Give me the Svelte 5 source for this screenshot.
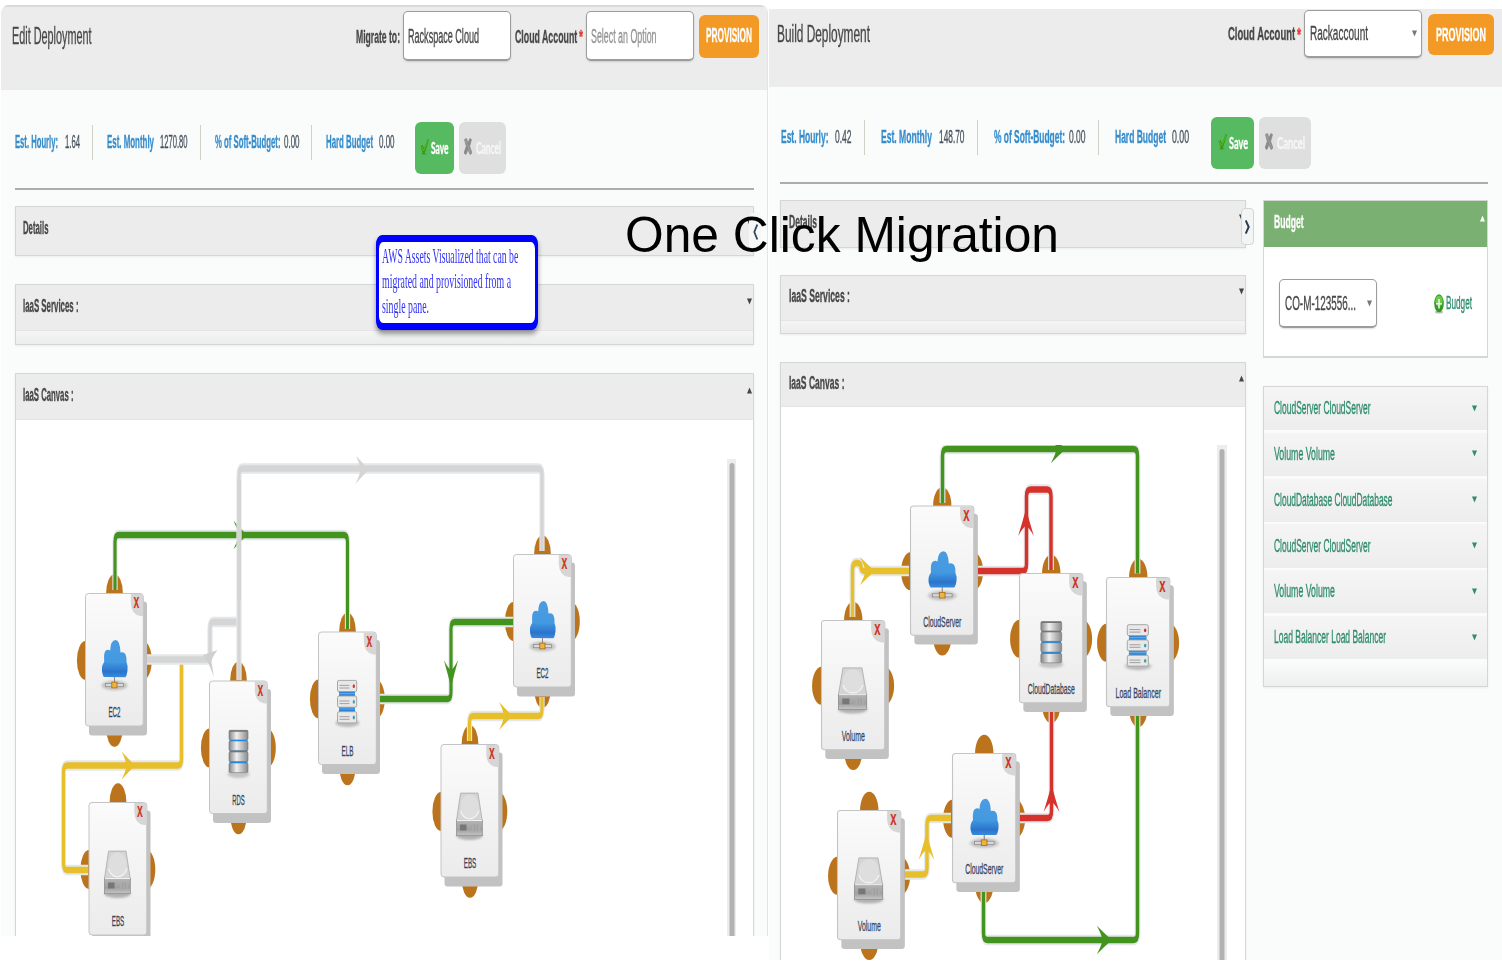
<script>
  const left = {
    id: 'stage-left', sx: 0.5, nx: 1, ny: 1,
    view: [16, 420, 737, 516],
    bar: [727, 459, 9, 480],
    nodes: [
      { x: 85.5, y: 593.5, kind: 'cloud', label: 'EC2', w: 12 },
      { x: 209.5, y: 681, kind: 'db', label: 'RDS', w: 12.5 },
      { x: 89, y: 802.5, kind: 'disk', label: 'EBS', w: 12.5 },
      { x: 318.5, y: 632, kind: 'lb', label: 'ELB', w: 12 },
      { x: 513.5, y: 554.5, kind: 'cloud', label: 'EC2', w: 12 },
      { x: 441, y: 744.5, kind: 'disk', label: 'EBS', w: 12.5 }
    ],
    wires: [
      { c: '#43931f', p: [[115, 590], [115, 535], [347.5, 535], [347.5, 629]], a: [240, 535, 0] },
      { c: '#e6bf2b', p: [[88, 870], [63.5, 870], [63.5, 765.5], [181.5, 765.5], [181.5, 663]], a: [128, 765.5, 0] },
      { c: '#d5d5d5', p: [[147, 659.5], [210, 659.5], [210, 622], [239, 622]] },
      { c: '#d5d5d5', p: [[239, 680], [239, 468.5], [542, 468.5], [542, 551]], a: [362, 469.5, 0] },
      { c: '#43931f', p: [[513, 622], [451, 622], [451, 699], [380, 699]], a: [451, 673, 90] },
      { c: '#e6bf2b', p: [[469.5, 741], [469.5, 716], [542, 716], [542, 697]], a: [505.5, 716, 0] }
    ]
  };
  const right = {
    id: 'stage-right', sx: 0.55, nx: 1.095, ny: 0.975,
    view: [781, 407, 464, 553],
    bar: [1217, 445, 10, 520],
    nodes: [
      { x: 910.5, y: 506, kind: 'cloud', label: 'CloudServer', w: 38 },
      { x: 821.5, y: 620.5, kind: 'disk', label: 'Volume', w: 23 },
      { x: 1019.5, y: 573.5, kind: 'db', label: 'CloudDatabase', w: 47 },
      { x: 1106.5, y: 577.5, kind: 'lb', label: 'Load Balancer', w: 45.5 },
      { x: 952.5, y: 753.5, kind: 'cloud', label: 'CloudServer', w: 38 },
      { x: 837.5, y: 810.5, kind: 'disk', label: 'Volume', w: 23 }
    ],
    wires: [
      { c: '#43931f', p: [[942.5, 503], [942.5, 449], [1137.5, 449], [1137.5, 573.5]], a: [1058, 449, 0] },
      { c: '#d6322c', p: [[978, 571], [1026.5, 571], [1026.5, 489.5], [1051, 489.5], [1051, 570]], a: [1026, 523, -90] },
      { c: '#e6bf2b', p: [[852.5, 617], [852.5, 563], [861, 563], [861, 571], [909, 571]], a: [867, 571, 0] },
      { c: '#e6bf2b', p: [[905, 874.5], [927, 874.5], [927, 818], [951, 818]], a: [926.5, 847, -90] },
      { c: '#d6322c', p: [[1020, 818], [1051.5, 818], [1051.5, 711]], a: [1051.5, 799, -90] },
      { c: '#43931f', p: [[983.5, 891], [983.5, 940], [1137.5, 940], [1137.5, 715]], a: [1104, 940, 0] }
    ]
  };
  const leftStats = [
    ['Est. Hourly:', 43, '1.64', 15],
    ['Est. Monthly', 47, '1270.80', 27.5],
    ['% of Soft-Budget:', 65.5, '0.00', 15.5],
    ['Hard Budget', 47, '0.00', 15.5]
  ];
  const rightStats = [
    ['Est. Hourly:', 47.5, '0.42', 16.5],
    ['Est. Monthly', 51, '148.70', 25.5],
    ['% of Soft-Budget:', 71, '0.00', 16.5],
    ['Hard Budget', 51, '0.00', 17]
  ];
  const resources = [
    ['CloudServer CloudServer', 96.5],
    ['Volume Volume', 61],
    ['CloudDatabase CloudDatabase', 118.5],
    ['CloudServer CloudServer', 96.5],
    ['Volume Volume', 61],
    ['Load Balancer Load Balancer', 112]
  ];

  const pen = document.createElement('canvas').getContext('2d');
  // Horizontal scale that makes a text exactly `w` pixels wide.
  function squeeze(text, w, size, cls = '') {
    const family = cls.includes('serif') ? 'Liberation Serif' : cls.includes('lato') ? 'Lato' : 'Liberation Sans';
    pen.font = `${cls.includes('bold') ? 700 : 400} ${size * 4}px "${family}"`;
    return (w * 4) / pen.measureText(text).width;
  }

  // Rounded polyline in a horizontally compressed coordinate space.
  function route(points, sx) {
    const p = points.map(([x, y]) => [x / sx, y]);
    let d = `M${p[0]}`;
    for (let i = 1; i < p.length - 1; i++) {
      const step = (q) => {
        const dx = q[0] - p[i][0], dy = q[1] - p[i][1];
        const len = Math.hypot(dx, dy), r = Math.min(7, len / 2);
        return [p[i][0] + (dx / len) * r, p[i][1] + (dy / len) * r];
      };
      d += `L${step(p[i - 1])}Q${p[i]} ${step(p[i + 1])}`;
    }
    return d + `L${p[p.length - 1]}`;
  }
</script>

{#snippet t(text, w, size, cls)}
  <div class="t {cls}" style="width:{w}px;height:{size}px;font-size:{size}px"><span style="transform:scaleX({squeeze(text, w, size, cls)})">{text}</span></div>
{/snippet}

{#snippet tri(up, cls)}
  <svg class="tri {cls}" width="5" height="7" viewBox="0 0 5 7"><path d={up ? 'M0 6.5L2.5 .5L5 6.5Z' : 'M0 .5H5L2.5 6.5Z'} fill="currentColor" /></svg>
{/snippet}

{#snippet stats(list)}
  {#each list as [label, lw, value, vw]}
    <div class="stat">
      {@render t(label, lw, 18, 'bold blue')}
      {@render t(value, vw, 18, 'ink')}
    </div>
  {/each}
{/snippet}

{#snippet buttons(sw, cw)}
  <div class="actions">
    <button class="save">
      <svg width="9" height="17" viewBox="0 0 9 17"><path d="M.6 8L2.7 7L4 10.5L7.6 1L9 2L4.6 16H2.8Z" fill="#3a9a10" /><path d="M1.5 8.5L3.5 13L8 2.5" fill="none" stroke="#5cba28" stroke-width=".9" /><path d="M1.5 16h5" stroke="#2c7d35" opacity=".5" /></svg>
      {@render t('Save', sw, 17, 'bold lato white')}
    </button>
    <button class="cancel">
      <svg width="8" height="17" viewBox="0 0 8 17"><path d="M.5 1.5L2.5 .5L4 5L5.8 .5L7.5 1.5L5.6 8.3L8 15L6 16.5L4 11.5L2 16.5L0 15L2.3 8.3Z" fill="#8a8a8a" stroke="#8a8a8a" stroke-width=".7" /><path d="M1.5 2L4 8.3L6.5 15" fill="none" stroke="#aaa" stroke-width=".7" /></svg>
      {@render t('Cancel', cw, 17, 'bold lato pale')}
    </button>
  </div>
{/snippet}

{#snippet icon(kind)}
  {#if kind === 'cloud'}
    <ellipse cx="29" cy="92" rx="13" ry="5" fill="#999" opacity=".5" filter="url(#soft)" />
    <path d="M29 83v8" stroke="#888" stroke-width="1" />
    <rect x="20" y="90" width="18" height="3.2" fill="#d8d8d8" stroke="#888" stroke-width=".7" />
    <rect x="26.3" y="88.6" width="5.2" height="5.8" fill="#eeb440" stroke="#a76a16" stroke-width=".8" />
    <path d="M18.3 83.5Q15.8 79 16.6 73Q17.3 70 18.7 68.5Q18 58 20.6 56.8Q22.8 55.6 24.6 57Q25.2 46.5 30 46.4Q34.5 46.5 35 59Q38.5 58 40.1 61Q41.2 63.5 41 68.5Q42.6 72 42 77Q41.4 82 40 83.7Z" fill="url(#sky)" />
    <path d="M19 69Q25 74 32 73Q37 73 40.5 69.5" fill="none" stroke="#3187d6" stroke-width="1.4" opacity=".4" />
  {:else if kind === 'db'}
    <ellipse cx="29" cy="93" rx="11" ry="4" fill="#999" opacity=".5" filter="url(#soft)" />
    <rect x="20" y="56" width="18" height="30" fill="#2688dc" />
    {#each [49.3, 60, 71, 82] as y}
      <rect x="19.5" y={y} width="19" height="9.6" rx="1.4" fill="url(#steel)" stroke="#777" stroke-width=".6" />
    {/each}
    <path d="M20.5 59.5h17M20.5 70.5h17M20.5 81.5h17" stroke="#2688dc" stroke-width="1.1" />
    <path d="M20 50h18" stroke="#777" stroke-width="1.6" />
  {:else if kind === 'disk'}
    <ellipse cx="28.5" cy="91.5" rx="13" ry="4" fill="#888" opacity=".6" filter="url(#soft)" />
    <path d="M19.6 48.6H37L41.2 76H15.5Z" fill="#d5d5d5" stroke="#aaa" stroke-width=".8" />
    <ellipse cx="28.6" cy="62" rx="9.2" ry="12" fill="#dedede" />
    <path d="M19.5 66Q22 74.3 28.7 74.3Q35 74.3 38 66" fill="none" stroke="#f4f4f4" stroke-width="1.2" />
    <rect x="15.5" y="75.8" width="25.8" height="15.4" fill="url(#base)" stroke="#888" stroke-width=".7" />
    <path d="M15.8 76H41" stroke="#f2f2f2" stroke-width="1" />
    <rect x="19" y="80" width="6.5" height="6" fill="#777" />
    <rect x="31" y="80" width="8" height="6.5" fill="#aaa" />
    <path d="M33.5 80v6.5M36.2 80v6.5" stroke="#8f8f8f" stroke-width=".5" />
  {:else}
    <ellipse cx="29" cy="91" rx="12" ry="4" fill="#999" opacity=".6" filter="url(#soft)" />
    <rect x="20.5" y="58" width="16" height="24" fill="#2b82d4" />
    <path d="M20.5 61.7h16M20.5 77h16" stroke="#5aa9ea" stroke-width="1.2" />
    {#each [48.4, 64, 79.7] as y, i}
      <rect x="19" y={y} width="19.2" height="11.2" rx="1.6" fill="#e8e8e8" stroke="#a0a0a0" stroke-width=".9" />
      <path d={`M21 ${y + 5}h10M21 ${y + 7.6}h10`} stroke="#999" stroke-width=".9" />
      <ellipse cx="35.3" cy={y + 5.8} rx="1.1" ry="1.9" fill={i ? '#39a0ae' : '#c93a2d'} />
    {/each}
  {/if}
{/snippet}

{#snippet canvas(c)}
  <svg class="canvas" width={c.view[2]} height={c.view[3]} viewBox={c.view.join(' ')}>
    <defs>
      <linearGradient id="card" x2="0" y2="1"><stop offset="0" stop-color="#fbfbfc" /><stop offset="1" stop-color="#ebebec" /></linearGradient>
      <linearGradient id="sky" x2="0" y2="1"><stop offset="0" stop-color="#4c9ce2" /><stop offset=".6" stop-color="#4399e0" /><stop offset=".85" stop-color="#2a74cc" /><stop offset="1" stop-color="#3a8bdc" /></linearGradient>
      <linearGradient id="steel"><stop offset="0" stop-color="#858585" /><stop offset=".4" stop-color="#f0f0f0" /><stop offset="1" stop-color="#8a8a8a" /></linearGradient>
      <linearGradient id="base" x2="0" y2="1"><stop offset="0" stop-color="#b5b5b5" /><stop offset=".6" stop-color="#a0a0a0" /><stop offset="1" stop-color="#c5c5c5" /></linearGradient>
      <filter id="soft" x="-30%" y="-80%" width="160%" height="260%"><feGaussianBlur stdDeviation="1.3" /></filter>
      <clipPath id={c.id}><rect x={c.view[0]} y={c.bar[1] - (c === left ? 2 : 0)} width={c.view[2]} height="600" /></clipPath>
    </defs>
    <g clip-path={`url(#${c.id})`}>
      {#each c.nodes as n}
        <g transform={`translate(${n.x} ${n.y}) scale(${c.nx} ${c.ny})`} fill="#bb741c">
          <ellipse cx="29" cy="0" rx="8.4" ry="19.3" />
          <ellipse cx="29" cy="134" rx="8.4" ry="19.3" />
          <ellipse cx="0" cy="67" rx="8.6" ry="19.5" />
          <ellipse cx="57.5" cy="67" rx="8.8" ry="19.5" />
        </g>
      {/each}
      {#each c.wires as w}
        <g transform={`scale(${c.sx} 1)`} fill="none">
          <path d={route(w.p, c.sx)} stroke="#e4e8eb" stroke-width="10.5" />
          <path d={route(w.p, c.sx)} stroke={w.c} stroke-width="6.3" />
          {#if w.a}
            <path transform={`translate(${w.a[0] / c.sx} ${w.a[1]}) rotate(${w.a[2]})`} d="M14 0Q2-6-13-14.3Q-4-5-3 0Q-4 5-13 14.3Q2 6 14 0Z" fill={w.c} />
          {/if}
        </g>
      {/each}
      {#if c === left}
        <path d="M237 480V600h4V480Z" fill="#d5d5d5" />
        <path d="M203 655L217.5 650Q212 657 211.5 662L214 677Q209 663 203 655Z" fill="#d0d0d0" />
      {/if}
      {#each c.nodes as n}
        <g transform={`translate(${n.x} ${n.y}) scale(${c.nx} ${c.ny})`}>
          <rect x="3.5" y="8" width="58" height="134" rx="3" fill="#c2c2c2" />
          <rect x="0" y="0" width="57.8" height="132.5" rx="3" fill="url(#card)" stroke="#c4c4c4" stroke-width="1" />
          <path d="M45.3.5H55Q57.5.5 57.5 4V22.5H55Q45.5 21 45.3 9Z" fill="#d6d6d6" />
          {@render icon(n.kind)}
        </g>
        <text transform={`translate(${n.x + 48.1 * c.nx} ${n.y + 14.7}) scale(${squeeze('x', 5.8 * c.nx, 20, 'bold')} 1)`} font-size="20" font-weight="700" fill="#cf3428">x</text>
        <text class="label" transform={`translate(${n.x + 29 * c.nx - n.w / 2} ${n.y + 124 * c.ny - 0.3}) scale(${squeeze(n.label, n.w, 15)} 1)`} font-size="15" fill="#39465a">{n.label}</text>
      {/each}
      <rect x={c.bar[0]} y={c.bar[1]} width={c.bar[2]} height={c.bar[3]} fill="#ededed" />
      <rect x={c.bar[0] + 2.5} y={c.bar[1] + 4} width="5" height={c.bar[3]} rx="2.5" fill="#b2b2b2" />
    </g>
  </svg>
{/snippet}

<div class="page">
  <section class="panel edit">
    <header>
      {@render t('Edit Deployment', 79.5, 23.5, 'dark title')}
      {@render t('Migrate to:', 44, 19, 'bold dark')}
      <div class="field f1">{@render t('Rackspace Cloud', 71, 19.5, 'dark')}</div>
      {@render t('Cloud Account', 62.5, 19, 'bold dark')}
      {@render t('*', 4, 19, 'bold red')}
      <div class="field f2">{@render t('Select an Option', 65.5, 19.5, 'muted')}</div>
      <button class="provision">{@render t('PROVISION', 46, 19.5, 'bold white')}</button>
    </header>
    <div class="body">
      <div class="stats">
        {@render stats(leftStats)}
        {@render buttons(17.5, 25)}
      </div>
      <div class="box details">{@render t('Details', 25.5, 18, 'bold dark')}{@render tri(false, '')}</div>
      <div class="box services"><div class="head">{@render t('IaaS Services :', 55.5, 18, 'bold dark')}{@render tri(false, '')}</div></div>
      <div class="box work">
        <div class="head">{@render t('IaaS Canvas :', 50.5, 18, 'bold dark')}{@render tri(true, '')}</div>
        {@render canvas(left)}
      </div>
    </div>
  </section>

  <section class="panel build">
    <header>
      {@render t('Build Deployment', 93, 23, 'dark title')}
      {@render t('Cloud Account', 67.5, 18.5, 'bold dark')}
      {@render t('*', 4, 19, 'bold red')}
      <div class="field f3">{@render t('Rackaccount', 58, 19.5, 'dark')}{@render tri(false, 'faint')}</div>
      <button class="provision">{@render t('PROVISION', 50, 19, 'bold white')}</button>
    </header>
    <div class="body">
      <div class="stats">
        {@render stats(rightStats)}
        {@render buttons(19, 28)}
      </div>
      <div class="columns">
        <main>
          <div class="box details">{@render t('Details', 28, 17.5, 'bold dark')}{@render tri(false, '')}</div>
          <div class="box services"><div class="head">{@render t('IaaS Services :', 61, 17.5, 'bold dark')}{@render tri(false, '')}</div></div>
          <div class="box work">
            <div class="head">{@render t('IaaS Canvas :', 55.5, 17.5, 'bold dark')}{@render tri(true, '')}</div>
            {@render canvas(right)}
          </div>
        </main>
        <aside>
          <div class="budget">
            <div class="bhead">{@render t('Budget', 29.5, 18, 'bold white')}{@render tri(true, 'white')}</div>
            <div class="bbody">
              <div class="field f4">{@render t('CO-M-123556...', 71, 20, 'dark')}{@render tri(false, 'faint')}</div>
              <div class="add">
                <svg width="10" height="20" viewBox="0 0 10 20"><ellipse cx="5" cy="18" rx="4" ry="1.5" fill="#bbb" /><ellipse cx="5" cy="9.3" rx="4.8" ry="9" fill="#2f9d1e" /><ellipse cx="5" cy="7" rx="3.6" ry="5.5" fill="#6cc94c" /><path d="M5 5v9.5M2 9.7h6" stroke="#eee" stroke-width="1.6" /></svg>
                {@render t('Budget', 26, 18, 'green')}
              </div>
            </div>
          </div>
          <div class="list">
            {#each resources as [name, w]}
              <div class="row">{@render t(name, w, 18, 'green')}{@render tri(false, 'green')}</div>
            {/each}
          </div>
        </aside>
      </div>
    </div>
  </section>

  <div class="handle hl"><svg width="5" height="16" viewBox="0 0 5 16"><path d="M4.3 .5L1.3 8L4.3 15.5" fill="none" stroke="#34495e" stroke-width="1.8" /></svg></div>
  <div class="handle hr"><svg width="5" height="14" viewBox="0 0 5 14"><path d="M.7 .5L3.7 7L.7 13.5" fill="none" stroke="#2c3e50" stroke-width="2" /></svg></div>
  <div class="note">
    <div class="paper">
      {@render t('AWS Assets Visualized that can be', 137, 21.5, 'serif')}
      {@render t('migrated and provisioned from a', 129, 21.5, 'serif')}
      {@render t('single pane.', 47, 21.5, 'serif')}
    </div>
  </div>
  <div class="headline">{@render t('One Click Migration', 434, 49.5, 'black')}</div>
</div>

<style>
  :global(body) { margin: 0; background: #fff; }
  .page { position: relative; width: 1502px; height: 962px; overflow: hidden; display: flex; align-items: flex-start; gap: 1px; padding-left: 1px; box-sizing: border-box; font-family: "Liberation Sans", Arial, sans-serif; }
  .page * { box-sizing: border-box; }
  svg { display: block; flex: none; }
  .t { flex: none; line-height: 1; white-space: nowrap; text-align: left; -webkit-text-stroke: .35px currentColor; }
  .t span { display: inline-block; transform-origin: 0 50%; vertical-align: top; }
  .label { stroke: #39465a; stroke-width: .3px; }
  .bold { font-weight: 700; }
  .lato { font-family: Lato, sans-serif; }
  .dark { color: #484848; }
  .ink { color: #48525e; }
  .blue { color: #378dcc; }
  .red { color: #e8352c; margin-left: 2px; }
  .muted { color: #939393; }
  .white { color: #fff; }
  .pale { color: #f6f6f6; }
  .green { color: #2f8c6e; }
  .black { color: #000; -webkit-text-stroke: 0; }
  .serif { color: #3232f5; font-family: "Liberation Serif", serif; -webkit-text-stroke: 0; }
  .tri { color: #444; }
  .tri.white { color: #fff; }
  .tri.green { color: #2f8c6e; }
  .tri.faint { color: #777; }

  .panel { background: #fafcfb; overflow: hidden; flex: none; }
  .edit { width: 767px; height: 931px; margin-top: 5px; border-radius: 8px 8px 0 0; border-right: 1px solid #e4e4e4; }
  .build { width: 733px; height: 951px; margin-top: 9px; }
  header { background: #ececec; display: flex; align-items: center; }
  .edit header { height: 85px; padding: 0 8px 25px 10.5px; border-top: 2px solid #dadada; }
  .edit .title, .edit .field .t { margin-top: 2px; }
  .build header { height: 78px; padding: 0 8px 28px 8px; }
  .title { margin-right: auto; }
  .field { height: 50px; background: #fff; border: 1px solid #9c9c9c; border-bottom-width: 2px; border-radius: 5px; display: flex; align-items: center; justify-content: space-between; padding: 0 4.5px; box-shadow: 0 1px 2px #0002; }
  .f1 { width: 108px; margin: 0 4px 0 3px; }
  .f2 { width: 108px; margin: 0 5.5px 0 2.5px; padding-left: 4px; }
  .f3 { width: 118px; height: 48px; margin: 0 6px 0 3px; }
  .f4 { width: 98px; height: 49px; }
  button { border: 0; padding: 0; font: inherit; display: flex; align-items: center; justify-content: center; border-radius: 6px; }
  .provision { width: 60px; height: 43px; background: #f39a26; }
  .build .provision { width: 66px; height: 41px; }

  .edit .body { padding: 0 13.5px 0 13.5px; }
  .build .body { padding: 0 14px 0 11px; }
  .stats { display: grid; align-items: center; border-bottom: 2px solid #a9adab; }
  .edit .stats { height: 100px; padding-top: 6px; grid-template-columns: 78px 108px 111.5px 103px 91px; }
  .build .stats { height: 97px; padding-top: 5px; grid-template-columns: 85px 113px 121px 112.5px 99px; }
  .stat { display: flex; align-items: center; justify-content: space-between; height: 35px; border-right: 1px solid #cfd1c6; padding-right: 12px; padding-left: 14px; }
  .edit .stat:first-child { padding-left: 0; }
  .build .stat { padding: 0 12.5px 0 16px; }
  .build .stat:first-child { padding-left: .5px; }
  .stat:nth-child(4) { border: 0; padding-right: 20.5px; }
  .build .stat:nth-child(4) { padding-right: 23px; padding-left: 15.5px; }
  .actions { display: flex; justify-content: space-between; margin-top: 12px; margin-left: -.5px; }
  .save, .cancel { height: 52px; }
  .save { width: 39px; background: #56bb60; gap: 2px; padding-left: 1px; }
  .cancel { width: 47.5px; background: #dfdfdf; gap: 4px; }
  .build .save { width: 42.5px; }
  .build .cancel { width: 51.5px; }
  .actions button > svg:first-child { margin-top: -4px; }
  .actions .t { margin-top: -1px; }

  .box { background: #ececec; border: 1px solid #d6d6d6; box-shadow: 0 1px 2px #0001; }
  .details, .head { display: flex; justify-content: space-between; padding: 0 1px 0 8px; align-items: flex-start; }
  .edit .details, .edit .head { padding-left: 7.4px; }
  .details { height: 50px; margin-top: 16px; padding-top: 12px; }
  .services { height: 61px; margin-top: 28px; background: linear-gradient(#f6f6f6 75%, #ececec); }
  .head { height: 46px; padding-top: 12px; background: #ececec; border-bottom: 1px solid #e4e4e4; }
  .head .tri { margin-top: 1px; }
  .work { margin-top: 28px; border-bottom: 0; background: #fff; }

  .columns { display: flex; gap: 17px; margin-top: 16px; }
  main { width: 466px; }
  aside { width: 225px; }
  .build .details { height: 48px; margin-top: 0; padding-top: 12.6px; }
  .build .services { height: 59px; margin-top: 27px; }
  .build .head { height: 45px; padding-top: 12px; }
  .build .head .tri { margin-top: 0; }
  .build .work .head { height: 44px; }

  .budget { height: 158px; background: #fff; border: 1px solid #d6d6d6; border-bottom: 2px solid #d6d6d6; }
  .bhead { height: 46px; background: #7ab071; display: flex; align-items: flex-start; justify-content: space-between; padding: 12px 2px 0 9.5px; }
  .bhead .tri { margin-top: 2px; }
  .bbody { display: flex; align-items: center; justify-content: space-between; padding: 32px 15px 0; }
  .add { display: flex; align-items: center; gap: 2px; }
  .add .t { margin-top: -2px; }
  .list { margin-top: 28px; height: 301px; border: 1px solid #d6d6d6; background: linear-gradient(#fafcfb 92%, #eee); box-shadow: 0 1px 2px #0001; }
  .row { height: 43.3px; margin-bottom: 2.5px; background: linear-gradient(#f5f5f5, #ededed); display: flex; align-items: center; justify-content: space-between; padding: 0 10px 1px; }

  .handle { position: absolute; display: flex; align-items: center; justify-content: center; border-radius: 4px; background: #f3f4f4; }
  .hl { left: 749px; top: 213px; width: 12px; height: 37px; background: #f6f7f7; }
  .hr { left: 1241px; top: 208px; width: 13px; height: 37px; border: 1px solid #d5d5d5; }
  .note { position: absolute; left: 376px; top: 235px; width: 162px; height: 95px; padding: 7px 3px; border-radius: 6px / 9px; background: #00f; box-shadow: 0 4px 5px #0006; }
  .paper { height: 81px; border-radius: 4px / 7px; background: #fff; padding: 4px 3px; display: flex; flex-direction: column; gap: 3.7px; }
  .headline { position: absolute; left: 625px; top: 210px; }
</style>
